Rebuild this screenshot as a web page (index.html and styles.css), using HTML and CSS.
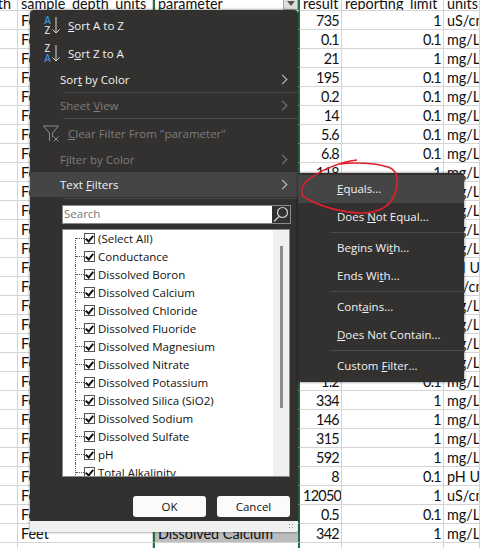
FILE: index.html
```html
<!DOCTYPE html>
<html>
<head>
  <title>Filter menu</title>
  <meta charset="UTF-8">
  <link rel="stylesheet" href="styles.css">
</head>
<body>
  <div id="sheet">
    <div class="row headRow"><div class="cell end">depth</div><div class="cell">sample_depth_units</div><div class="cell param">parameter<span class="dropBtn"></span></div><div class="cell">result</div><div class="cell">reporting_limit</div><div class="cell">units</div></div>
    <div class="row"><div class="cell"></div><div class="cell">Feet</div><div class="cell param"></div><div class="cell num">735</div><div class="cell num">1</div><div class="cell">uS/cm</div></div>
    <div class="row"><div class="cell"></div><div class="cell">Feet</div><div class="cell param"></div><div class="cell num">0.1</div><div class="cell num">0.1</div><div class="cell">mg/L</div></div>
    <div class="row"><div class="cell"></div><div class="cell">Feet</div><div class="cell param"></div><div class="cell num">21</div><div class="cell num">1</div><div class="cell">mg/L</div></div>
    <div class="row"><div class="cell"></div><div class="cell">Feet</div><div class="cell param"></div><div class="cell num">195</div><div class="cell num">0.1</div><div class="cell">mg/L</div></div>
    <div class="row"><div class="cell"></div><div class="cell">Feet</div><div class="cell param"></div><div class="cell num">0.2</div><div class="cell num">0.1</div><div class="cell">mg/L</div></div>
    <div class="row"><div class="cell"></div><div class="cell">Feet</div><div class="cell param"></div><div class="cell num">14</div><div class="cell num">0.1</div><div class="cell">mg/L</div></div>
    <div class="row"><div class="cell"></div><div class="cell">Feet</div><div class="cell param"></div><div class="cell num">5.6</div><div class="cell num">0.1</div><div class="cell">mg/L</div></div>
    <div class="row"><div class="cell"></div><div class="cell">Feet</div><div class="cell param"></div><div class="cell num">6.8</div><div class="cell num">0.1</div><div class="cell">mg/L</div></div>
    <div class="row"><div class="cell"></div><div class="cell">Feet</div><div class="cell param"></div><div class="cell num">118</div><div class="cell num">1</div><div class="cell">mg/L</div></div>
    <div class="row"><div class="cell"></div><div class="cell">Feet</div><div class="cell param"></div><div class="cell num">1</div><div class="cell num">1</div><div class="cell">mg/L</div></div>
    <div class="row"><div class="cell"></div><div class="cell">Feet</div><div class="cell param"></div><div class="cell num">1</div><div class="cell num">1</div><div class="cell">mg/L</div></div>
    <div class="row"><div class="cell"></div><div class="cell">Feet</div><div class="cell param"></div><div class="cell num">1</div><div class="cell num">1</div><div class="cell">mg/L</div></div>
    <div class="row"><div class="cell"></div><div class="cell">Feet</div><div class="cell param"></div><div class="cell num">1</div><div class="cell num">1</div><div class="cell">mg/L</div></div>
    <div class="row"><div class="cell"></div><div class="cell">Feet</div><div class="cell param"></div><div class="cell num">8</div><div class="cell num">0.1</div><div class="cell">pH Units</div></div>
    <div class="row"><div class="cell"></div><div class="cell">Feet</div><div class="cell param"></div><div class="cell num">1</div><div class="cell num">1</div><div class="cell">uS/cm</div></div>
    <div class="row"><div class="cell"></div><div class="cell">Feet</div><div class="cell param"></div><div class="cell num">1</div><div class="cell num">1</div><div class="cell">mg/L</div></div>
    <div class="row"><div class="cell"></div><div class="cell">Feet</div><div class="cell param"></div><div class="cell num">1</div><div class="cell num">1</div><div class="cell">mg/L</div></div>
    <div class="row"><div class="cell"></div><div class="cell">Feet</div><div class="cell param"></div><div class="cell num">1</div><div class="cell num">1</div><div class="cell">mg/L</div></div>
    <div class="row"><div class="cell"></div><div class="cell">Feet</div><div class="cell param"></div><div class="cell num">1</div><div class="cell num">1</div><div class="cell">mg/L</div></div>
    <div class="row"><div class="cell"></div><div class="cell">Feet</div><div class="cell param"></div><div class="cell num">1.2</div><div class="cell num">0.1</div><div class="cell">mg/L</div></div>
    <div class="row"><div class="cell"></div><div class="cell">Feet</div><div class="cell param"></div><div class="cell num">334</div><div class="cell num">1</div><div class="cell">mg/L</div></div>
    <div class="row"><div class="cell"></div><div class="cell">Feet</div><div class="cell param"></div><div class="cell num">146</div><div class="cell num">1</div><div class="cell">mg/L</div></div>
    <div class="row"><div class="cell"></div><div class="cell">Feet</div><div class="cell param"></div><div class="cell num">315</div><div class="cell num">1</div><div class="cell">mg/L</div></div>
    <div class="row"><div class="cell"></div><div class="cell">Feet</div><div class="cell param"></div><div class="cell num">592</div><div class="cell num">1</div><div class="cell">mg/L</div></div>
    <div class="row"><div class="cell"></div><div class="cell">Feet</div><div class="cell param"></div><div class="cell num">8</div><div class="cell num">0.1</div><div class="cell">pH Units</div></div>
    <div class="row"><div class="cell"></div><div class="cell">Feet</div><div class="cell param"></div><div class="cell num">12050</div><div class="cell num">1</div><div class="cell">uS/cm</div></div>
    <div class="row"><div class="cell"></div><div class="cell">Feet</div><div class="cell param"></div><div class="cell num">0.5</div><div class="cell num">0.1</div><div class="cell">mg/L</div></div>
    <div class="row"><div class="cell"></div><div class="cell">Feet</div><div class="cell param picked">Dissolved Calcium</div><div class="cell num">342</div><div class="cell num">1</div><div class="cell">mg/L</div></div>
    <div class="row"><div class="cell"></div><div class="cell"></div><div class="cell param"></div><div class="cell"></div><div class="cell"></div><div class="cell"></div></div>
  </div>

  <div id="filterMenu">
    <div class="menuDark">
      <div class="item tall"><span class="sortIcon"><span class="letters"><b class="blue">A</b><b>Z</b></span><svg width="8" height="17" viewBox="0 0 8 17"><path d="M4 0v16M.5 12.5 4 16l3.5-3.5" fill="none" stroke="#d8d8d8"/></svg></span><span class="label"><u>S</u>ort A to Z</span></div>
      <div class="item tall"><span class="sortIcon"><span class="letters"><b>Z</b><b class="blue">A</b></span><svg width="8" height="17" viewBox="0 0 8 17"><path d="M4 0v16M.5 12.5 4 16l3.5-3.5" fill="none" stroke="#d8d8d8"/></svg></span><span class="label">S<u>o</u>rt Z to A</span></div>
      <div class="item plain"><span class="label">Sor<u>t</u> by Color</span><span class="chev"></span></div>
      <div class="sep"></div>
      <div class="item plain off"><span class="label">Sheet <u>V</u>iew</span><span class="chev"></span></div>
      <div class="sep"></div>
      <div class="item tall off"><svg class="funnel" width="17" height="17" viewBox="0 0 17 17"><path d="M.5 1h15L9.5 8v4M.5 1l6 7v8" fill="none" stroke="#8c8c8c"/><path d="M10.5 11.5l5 5M15.5 11.5l-5 5" stroke="#8c8c8c" fill="none"/></svg><span class="label"><u>C</u>lear Filter From "parameter"</span></div>
      <div class="item plain off"><span class="label">F<u>i</u>lter by Color</span><span class="chev"></span></div>
      <div class="item plain active"><span class="label">Text <u>F</u>ilters</span><span class="chev"></span></div>
      <div class="sep last"></div>

      <div class="searchBox">
        <div class="searchText">Search</div>
        <div class="searchBtn"><svg width="16" height="16" viewBox="0 0 16 16"><circle cx="9.5" cy="6.5" r="5" fill="none" stroke="#d0d0d0" stroke-width="1.2"/><path d="M6 10.5 1 15.5" stroke="#d0d0d0" stroke-width="1.2"/></svg></div>
      </div>

      <div class="listBox">
        <div class="tree">
          <div class="treeRow first"><span class="dots"></span><span class="check"></span>(Select All)</div>
          <div class="treeRow"><span class="dots"></span><span class="check"></span>Conductance</div>
          <div class="treeRow"><span class="dots"></span><span class="check"></span>Dissolved Boron</div>
          <div class="treeRow"><span class="dots"></span><span class="check"></span>Dissolved Calcium</div>
          <div class="treeRow"><span class="dots"></span><span class="check"></span>Dissolved Chloride</div>
          <div class="treeRow"><span class="dots"></span><span class="check"></span>Dissolved Fluoride</div>
          <div class="treeRow"><span class="dots"></span><span class="check"></span>Dissolved Magnesium</div>
          <div class="treeRow"><span class="dots"></span><span class="check"></span>Dissolved Nitrate</div>
          <div class="treeRow"><span class="dots"></span><span class="check"></span>Dissolved Potassium</div>
          <div class="treeRow"><span class="dots"></span><span class="check"></span>Dissolved Silica (SiO2)</div>
          <div class="treeRow"><span class="dots"></span><span class="check"></span>Dissolved Sodium</div>
          <div class="treeRow"><span class="dots"></span><span class="check"></span>Dissolved Sulfate</div>
          <div class="treeRow"><span class="dots"></span><span class="check"></span>pH</div>
          <div class="treeRow"><span class="dots"></span><span class="check"></span>Total Alkalinity</div>
        </div>
        <div class="scrollTrack"><div class="scrollThumb"></div></div>
      </div>

      <div class="buttons">
        <div class="btn">OK</div>
        <div class="btn">Cancel</div>
      </div>
    </div>
    <div class="gripBar"><span class="grip"></span></div>
  </div>

  <div id="subMenu">
    <div class="subItem active"><u>E</u>quals...</div>
    <div class="subItem">Does <u>N</u>ot Equal...</div>
    <div class="subSep"></div>
    <div class="subItem">Begins Wi<u>t</u>h...</div>
    <div class="subItem">Ends Wi<u>t</u>h...</div>
    <div class="subSep"></div>
    <div class="subItem">Cont<u>a</u>ins...</div>
    <div class="subItem"><u>D</u>oes Not Contain...</div>
    <div class="subSep"></div>
    <div class="subItem">Custom <u>F</u>ilter...</div>
  </div>

  <svg id="redCircle" width="480" height="548" viewBox="0 0 480 548"><path d="M357 160C340 162 320 170 307 181C300 188 300 195 306 198C320 207 345 213 362 213C380 213 392 205 396 190C399 178 397 170 388 167C375 163 355 162 340 164" fill="none" stroke="#e0202a" stroke-width="1.6"/></svg>
</body>
</html>
```

FILE: styles.css
```css
html, body {
  margin: 0;
  padding: 0;
  height: 548px;
  overflow: hidden;
  background: #fff;
}
#sheet {
  font-family: Lato, Arial, sans-serif;
  font-size: 14.4px;
  color: #111;
}
.row {
  display: grid;
  grid-template-columns: 18px 135px 147px 42px 102px 1fr;
  height: 19px;
  overflow: hidden;
}
.headRow {
  height: 11px;
}
.headRow .cell {
  height: 11px;
  line-height: 7px;
  border-bottom-color: #d4d4d4;
}
.cell {
  box-sizing: border-box;
  height: 19px;
  line-height: 20px;
  padding: 0 3px;
  border-right: 1px solid #d4d4d4;
  border-bottom: 1px solid #d4d4d4;
  white-space: nowrap;
  overflow: hidden;
}
.end {
  display: flex;
  justify-content: flex-end;
  padding-right: 6px;
}
.num {
  text-align: right;
  padding-right: 2px;
  letter-spacing: -0.7px;
}
.param {
  position: relative;
  border-left: 2px solid #217346;
  border-right: 2px solid #217346;
}
.picked {
  background: #bdbdbd;
}
.dropBtn {
  position: absolute;
  top: -1px;
  right: 0;
  width: 15px;
  height: 11px;
  box-sizing: border-box;
  border: 1px solid #a8a8a8;
  background: #dedede;
}
.dropBtn:after {
  content: "";
  position: absolute;
  left: 3px;
  top: 1px;
  border-left: 4px solid transparent;
  border-right: 4px solid transparent;
  border-top: 5px solid #555;
}

#filterMenu {
  position: absolute;
  left: 30px;
  top: 10px;
  width: 268px;
  height: 522px;
  border-radius: 4px 4px 2px 2px;
  box-shadow: 0 0 3px rgba(0, 0, 0, 0.6);
  font-family: "Open Sans", Arial, sans-serif;
  font-size: 11.5px;
  overflow: hidden;
  display: flex;
  flex-direction: column;
}
.menuDark {
  height: 511px;
  background: #323130;
  color: #f2f2f2;
  padding-top: 1px;
  box-sizing: border-box;
  display: flex;
  flex-direction: column;
}
.item {
  display: flex;
  align-items: center;
  flex-shrink: 0;
}
.tall {
  height: 28px;
  padding-left: 13px;
}
.plain {
  height: 25px;
  padding-left: 30px;
}
.off {
  color: #7d7d7d;
}
.active {
  background: #454545;
}
.label {
  flex: 1;
}
.sortIcon {
  width: 25px;
  display: flex;
  align-items: center;
}
.letters {
  display: flex;
  flex-direction: column;
  width: 9px;
  font-size: 10px;
  line-height: 10px;
  text-align: center;
  color: #d8d8d8;
}
.letters b {
  font-weight: 600;
}
.letters .blue {
  color: #3f8fd8;
}
.funnel {
  margin-right: 8px;
}
.chev {
  width: 6px;
  height: 6px;
  margin-right: 12px;
  border-top: 1px solid #c8c8c8;
  border-right: 1px solid #c8c8c8;
  transform: rotate(45deg);
}
.off .chev {
  border-color: #7d7d7d;
}
.sep {
  height: 1px;
  margin-left: 33px;
  background: #4c4b4a;
  flex-shrink: 0;
}
.sep.last {
  margin-top: 1px;
}

.searchBox {
  display: flex;
  height: 19px;
  margin: 6px 7px 0 32px;
  border: 1px solid #8a8a8a;
  box-sizing: border-box;
}
.searchText {
  flex: 1;
  background: #fff;
  color: #777;
  line-height: 16px;
  padding-left: 1px;
}
.searchBtn {
  width: 16px;
  padding: 0 1px;
  background: #323130;
}

.listBox {
  display: flex;
  height: 248px;
  margin: 5px 8px 0 32px;
  background: #fff;
  color: #111;
  border: 1px solid #8a8a8a;
  box-sizing: border-box;
  overflow: hidden;
}
.tree {
  flex: 1;
  margin-top: -1px;
  padding: 0 0 0 12px;
  overflow: hidden;
}
.treeRow {
  position: relative;
  display: flex;
  align-items: center;
  height: 18px;
  border-left: 1px dotted #555;
  white-space: nowrap;
}
.treeRow.first {
  border-left-color: transparent;
}
.treeRow.first:before {
  content: "";
  position: absolute;
  left: -1px;
  top: 9px;
  height: 9px;
  border-left: 1px dotted #555;
}
.dots {
  width: 8px;
  border-top: 1px dotted #555;
}
.check {
  position: relative;
  width: 9px;
  height: 9px;
  margin-right: 3px;
  border: 1px solid #555;
  background: #fff;
  flex-shrink: 0;
}
.check:after {
  content: "";
  position: absolute;
  left: 2px;
  top: 0;
  width: 3px;
  height: 6px;
  border-right: 2px solid #111;
  border-bottom: 2px solid #111;
  transform: rotate(40deg);
}
.scrollTrack {
  width: 16px;
  background: #f0f0f0;
  padding: 16px 0 0 7px;
  box-sizing: border-box;
}
.scrollThumb {
  width: 3px;
  height: 162px;
  background: #8c8c8c;
}

.buttons {
  display: flex;
  justify-content: flex-end;
  gap: 11px;
  margin: 19px 8px 0 0;
}
.btn {
  width: 73px;
  height: 21px;
  line-height: 21px;
  text-align: center;
  background: #fbfbfb;
  color: #111;
  border-radius: 3px;
}
.gripBar {
  flex: 1;
  position: relative;
  background: #f0f0f0;
}
.grip {
  position: absolute;
  right: 3px;
  bottom: 2px;
  width: 7px;
  height: 7px;
  background: radial-gradient(circle, #999 1px, transparent 1px) 0 0 / 3px 3px;
}

#subMenu {
  position: absolute;
  left: 298px;
  top: 173px;
  width: 166px;
  height: 209px;
  box-sizing: border-box;
  padding-top: 2px;
  background: #323130;
  color: #f2f2f2;
  border-radius: 3px;
  box-shadow: 0 0 3px rgba(0, 0, 0, 0.6);
  font-family: "Open Sans", Arial, sans-serif;
  font-size: 11.5px;
}
.subItem {
  height: 28px;
  line-height: 28px;
  padding-left: 39px;
}
.subSep {
  height: 1px;
  margin: 1px 0 1px 33px;
  background: #4c4b4a;
}
#redCircle {
  position: absolute;
  left: 0;
  top: 0;
  pointer-events: none;
}
```
